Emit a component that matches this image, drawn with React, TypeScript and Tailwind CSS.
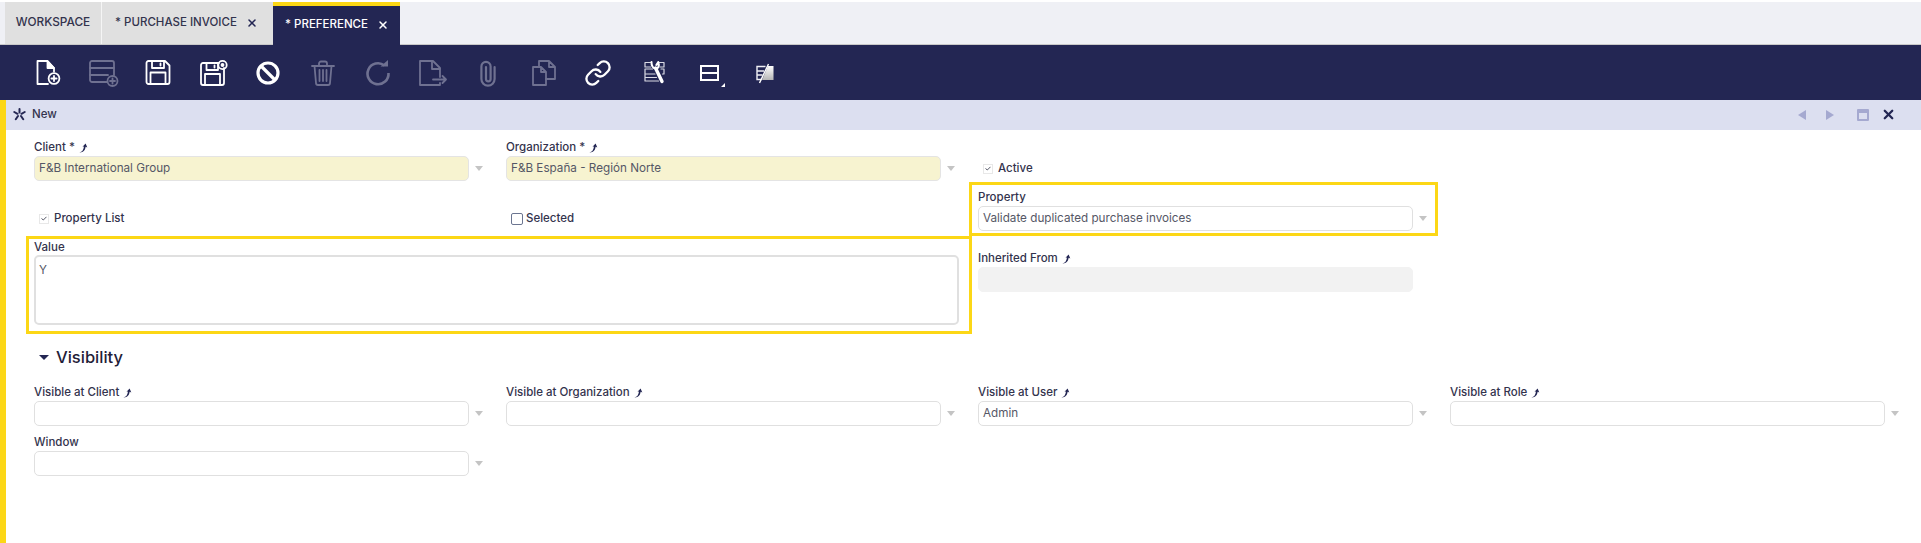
import { Link as LinkIcon, X } from "lucide-react";
import type { ReactNode } from "react";

const font = { fontFamily: "Inter, 'Open Sans', sans-serif" };

function Svg({ children, color = "#ffffff" }: { children: ReactNode; color?: string }) {
  return (
    <svg width="32" height="32" viewBox="0 0 32 32" fill="none" stroke={color} strokeWidth="1.8" strokeLinejoin="round" strokeLinecap="round">
      {children}
    </svg>
  );
}

const muted = "#6f7191";

const toolbar: ReactNode[] = [
  <Svg key="new">
    <path d="M16 27H5.5V4H15.5L22 11V14.5" />
    <path d="M15.5 4V11H22Z" fill="#fff" />
    <circle cx="22" cy="21.5" r="5.4" />
    <path d="M19.4 21.5H24.6M22 18.9V24.1" />
  </Svg>,
  <Svg key="newrow" color={muted}>
    <path d="M20 25H5a2 2 0 0 1-2-2V6a2 2 0 0 1 2-2h20a2 2 0 0 1 2 2v12" />
    <path d="M3 11H27M3 18H21" />
    <circle cx="25.5" cy="24" r="5" />
    <path d="M23 24H28M25.5 21.5V26.5" />
  </Svg>,
  <Svg key="save">
    <path d="M6.5 4H23L27.5 8.5V25a2 2 0 0 1-2 2H6.5a2 2 0 0 1-2-2V6a2 2 0 0 1 2-2Z" />
    <path d="M10 4V11H22V4M18.5 6.5V8.5M8.5 27V15.5H23.5V27" />
  </Svg>,
  <Svg key="saveclose">
    <path d="M22 6H6a2 2 0 0 0-2 2V26a2 2 0 0 0 2 2H25a2 2 0 0 0 2-2V11" />
    <path d="M9.5 6V13H21V6M17.5 8.5V10.5M8 28V17H23V28" />
    <circle cx="25.5" cy="8" r="4.2" />
    <circle cx="25.5" cy="8" r="1" fill="#fff" />
  </Svg>,
  <svg key="cancel" width="32" height="32" viewBox="0 0 32 32" fill="none" stroke="#fff" strokeWidth="3.2">
    <circle cx="16" cy="16" r="10" />
    <path d="M9 9L23 23" />
  </svg>,
  <Svg key="delete" color={muted}>
    <path d="M5 9H27M12 9V6.5a2 2 0 0 1 2-2H18a2 2 0 0 1 2 2V9" />
    <path d="M7.5 9L9 26a2 2 0 0 0 2 2H21a2 2 0 0 0 2-2L24.5 9" />
    <path d="M12.5 13V24M16 13V24M19.5 13V24" />
  </Svg>,
  <svg key="refresh" width="32" height="32" viewBox="0 0 32 32" fill="none" stroke={muted} strokeWidth="2.6">
    <path d="M22.5 8.5A10.5 10.5 0 1 0 26.5 16" />
    <path d="M18.5 9.5H26V3Z" fill={muted} stroke="none" />
  </svg>,
  <Svg key="export" color={muted}>
    <path d="M23 20V11L16 4H3V28H23V26" />
    <path d="M15 4V12H23M16 22.5H29M25.5 19L29 22.5L25.5 26" />
  </Svg>,
  <svg key="attach" width="32" height="32" viewBox="0 0 32 32" fill="none" stroke={muted} strokeWidth="2.2" strokeLinecap="round">
    <path d="M14 10V22a2.3 2.3 0 0 0 4.6 0V9.5a4.6 4.6 0 0 0-9.2 0V22a6.6 6.6 0 0 0 13.2 0V10" />
  </svg>,
  <Svg key="clone" color={muted}>
    <path d="M14 10H6V28H19V15L14 10ZM14 10V15H19" />
    <path d="M12 10V4H22L28 10V22H19M22 4V10H28" />
  </Svg>,
  <LinkIcon key="link" size={28} color="#fff" strokeWidth={2} className="ml-[1px]" />,
  <svg key="tools" width="32" height="32" viewBox="0 0 32 32" fill="none" strokeLinecap="round" strokeLinejoin="round">
    <g transform="translate(1.5 0)">
      <path d="M12 5.5H6.5V10H12M20.5 5.5H25.5V10H21.5M14 12H6.5V17H16.5M22.5 12H25.5V17H24M6.5 17V24H20M6.5 20.5H18" stroke="#d9d9e4" strokeWidth="1.2" />
      <path d="M17 11L23.5 24.5" stroke="#fff" strokeWidth="3.4" />
      <path d="M13 5C12.8 9 14.5 11.5 17.5 11.6C20 11.6 21 8.5 19.8 5L17.8 8" stroke="#fff" strokeWidth="2" />
    </g>
  </svg>,
  <div key="layout" className="relative h-[32px] w-[32px]">
    <div className="absolute left-[8px] top-[8px] flex h-[16px] w-[19px] flex-col border-2 border-white">
      <div className="flex-1 bg-[#232653]" />
      <div className="h-[2px] bg-white" />
      <div className="flex-1 bg-[#232653]" />
    </div>
    <div className="absolute left-[29px] top-[26px] h-0 w-0 border-b-[4px] border-l-[4px] border-b-white border-l-transparent" />
  </div>,
  <svg key="personal" width="32" height="32" viewBox="0 0 32 32" fill="none">
    <defs>
      <linearGradient id="split" x1="0" y1="0" x2="0" y2="1">
        <stop offset="0" stopColor="#ffffff" />
        <stop offset="1" stopColor="#b5b5b5" />
      </linearGradient>
    </defs>
    <g transform="translate(1.5 0)">
      <path d="M19.5 9H25V23H13.5Z" fill="url(#split)" />
      <path d="M17 9.5H8.5V22.5H13M8.5 14H15.5M8.5 18H14" stroke="#f0f0f5" strokeWidth="1.4" />
      <path d="M20 7L11 26" stroke="#fff" strokeWidth="1.4" />
    </g>
  </svg>,
];

function PinArrow() {
  return (
    <svg width="9" height="10" viewBox="0 0 9 10" className="ml-[4px] shrink-0" fill="#232653">
      <path d="M0.5 9.5C3 9 4.5 7 5 3.5L3.5 3.8L6.6 0.5L8.3 4.5L6.6 3.8C6.4 7 4 9.8 0.5 9.5Z" />
    </svg>
  );
}

function Caret() {
  return <div className="ml-[6px] h-0 w-0 shrink-0 border-x-[4.5px] border-t-[5px] border-x-transparent border-t-[#c4c4c4]" />;
}

type FieldProps = {
  label: string;
  value?: string;
  pin?: boolean;
  tone?: "plain" | "required" | "readonly";
};

function Field({ label, value = "", pin = false, tone = "plain" }: FieldProps) {
  const toneClass =
    tone === "required"
      ? "border-[#e4e4e4] bg-[#f7f3d0]"
      : tone === "readonly"
        ? "border-[#f2f2f2] bg-[#f2f2f2]"
        : "border-[#e0e0e0] bg-white";
  return (
    <div className="h-[43px] w-[450px]">
      <div className="flex h-[18px] items-center pt-[2px] text-[11.5px] font-medium leading-none text-[#33334d]">
        {label}
        {pin && <PinArrow />}
      </div>
      <div className="flex items-center">
        <div className={`flex h-[25px] w-[435px] items-center rounded-[5px] border px-[4px] text-[11.7px] text-[#555766] ${toneClass}`}>
          {value}
        </div>
        {tone !== "readonly" && <Caret />}
      </div>
    </div>
  );
}

function CheckField({ label, checked = true }: { label: string; checked?: boolean }) {
  return (
    <div className="flex items-center text-[11.5px] font-medium text-[#33334d]">
      {checked ? (
        <div className="mr-[5px] flex h-[10px] w-[10px] items-center justify-center border border-[#e8e8e8] bg-white">
          <svg width="6" height="5" viewBox="0 0 6 5" fill="none" stroke="#555766" strokeWidth="1">
            <path d="M0.5 2.5L2.3 4L5.5 0.8" />
          </svg>
        </div>
      ) : (
        <div className="mr-[3px] h-[12px] w-[12px] rounded-[2px] border border-[#6b7590] bg-white" />
      )}
      {label}
    </div>
  );
}

export default function App() {
  return (
    <div className="flex h-[543px] w-full flex-col overflow-hidden bg-white" style={font}>
      {/* Tabs */}
      <div className="mt-[2px] flex h-[43px] shrink-0 border-b border-[#c9c9c9] bg-[#eff0f5] pl-[5px] text-[11.5px] font-medium">
        <div className="flex h-[42px] w-[97px] items-center justify-center border-r border-[#f5f5f5] bg-[#e0e0e0] text-[11.8px] text-[#33334d]">WORKSPACE</div>
        <div className="flex h-[42px] w-[171px] items-center gap-[9px] bg-[#e0e0e0] pl-[13px] text-[#33334d]">
          * PURCHASE INVOICE
          <X size={12} strokeWidth={3} color="#232653" />
        </div>
        <div className="flex h-[43px] w-[127px] items-center gap-[9px] border-t-4 border-[#fcd716] bg-[#232653] pb-[1px] pl-[12px] text-white">
          * PREFERENCE
          <X size={12} strokeWidth={3} color="#ffffff" />
        </div>
      </div>

      {/* Toolbar */}
      <div className="flex h-[55px] shrink-0 items-center bg-[#232653] pl-[20px]">
        {toolbar.map((icon, i) => (
          <div key={i} className="flex h-[55px] w-[55px] items-center justify-center">
            {icon}
          </div>
        ))}
      </div>

      <div className="flex min-h-0 flex-1">
        <div className="w-[6px] shrink-0 bg-[#fcd716]" />
        <div className="min-w-0 flex-1">
          {/* Status bar */}
          <div className="flex h-[30px] items-center bg-[#dcdff0] pb-[1px] pl-[7px] pr-[25px] text-[11.5px] font-medium text-[#33334d]">
            <svg width="13" height="13" viewBox="0 0 13 13" fill="none" stroke="#232653" strokeWidth="2" strokeLinecap="round" className="mr-[6px]">
              <path d="M6.5 1V4.5M1.3 4L4.5 5.8M11.7 4L8.5 5.8M2.8 11.2L5 8M10.2 11.2L8 8" />
            </svg>
            New
            <div className="ml-auto flex items-center">
              <div className="h-0 w-0 border-y-[5px] border-r-[8px] border-y-transparent border-r-[#a5a9d0]" />
              <div className="ml-[20px] h-0 w-0 border-y-[5px] border-l-[8px] border-y-transparent border-l-[#a5a9d0]" />
              <div className="ml-[23px] h-[12px] w-[12px] rounded-[1px] border-2 border-t-4 border-[#a5a9d0]" />
              <X size={15} strokeWidth={3.6} color="#232653" className="ml-[12px]" />
            </div>
          </div>

          {/* Form */}
          <div className="grid grid-cols-[repeat(4,472px)] grid-rows-[44px_54px_98px] pl-[28px] pt-[8px]">
            <Field label="Client *" value="F&B International Group" pin tone="required" />
            <Field label="Organization *" value="F&B España - Región Norte" pin tone="required" />
            <div className="pl-[5px] pt-[22px]">
              <CheckField label="Active" />
            </div>
            <div />

            <div className="flex items-center pl-[5px] pt-[19px]">
              <CheckField label="Property List" />
            </div>
            <div className="flex items-center pl-[5px] pt-[19px]">
              <CheckField label="Selected" checked={false} />
            </div>
            <div className="ml-[-9px] h-[54px] w-[469px] border-[3px] border-[#fcd716] pl-[6px] pt-[3px]">
              <Field label="Property" value="Validate duplicated purchase invoices" />
            </div>
            <div />

            <div className="col-span-2 ml-[-8px] mr-[6px] h-[98px] border-[3px] border-[#fcd716] pl-[5px] pr-[10px]">
              <div className="flex h-[16px] items-center pt-[2px] text-[11.5px] font-medium text-[#33334d]">Value</div>
              <div className="h-[70px] rounded-[5px] border-2 border-[#e0e0e0] px-[3px] py-[5px] text-[11.7px] text-[#555766]">Y</div>
            </div>
            <div className="pt-[13px]">
              <Field label="Inherited From" pin tone="readonly" />
            </div>
          </div>

          {/* Visibility */}
          <div className="mt-[10px] flex h-[26px] items-center pl-[33px] text-[16.5px] font-medium text-[#1f2038]">
            <div className="mr-[7px] h-0 w-0 border-x-[5px] border-t-[5.5px] border-x-transparent border-t-[#232653]" />
            Visibility
          </div>
          <div className="grid grid-cols-[repeat(4,472px)] gap-y-[7px] pl-[28px] pt-[13px]">
            <Field label="Visible at Client" pin />
            <Field label="Visible at Organization" pin />
            <Field label="Visible at User" value="Admin" pin />
            <Field label="Visible at Role" pin />
            <Field label="Window" />
          </div>
        </div>
      </div>
    </div>
  );
}
